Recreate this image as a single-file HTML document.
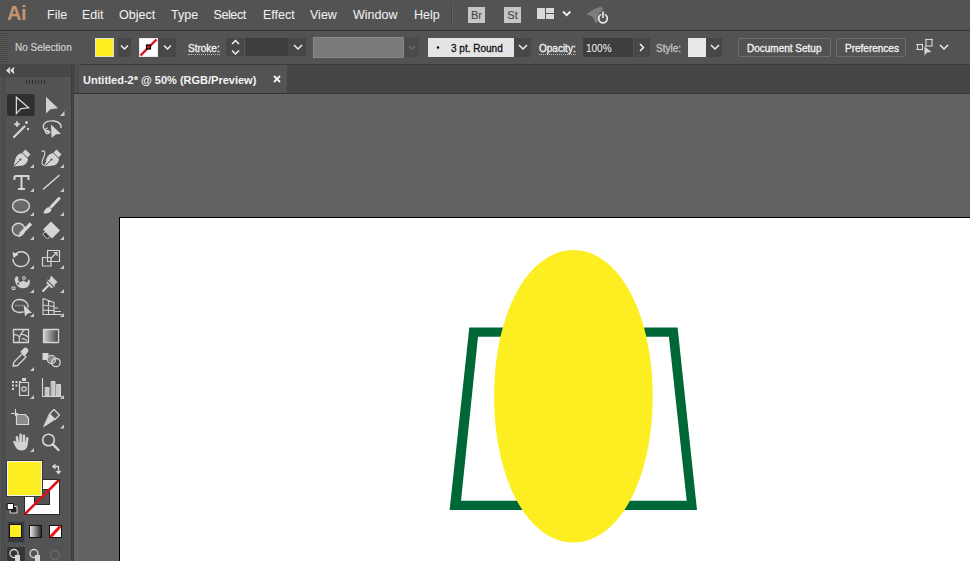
<!DOCTYPE html>
<html><head><meta charset="utf-8">
<style>
*{margin:0;padding:0;box-sizing:border-box}
html,body{width:970px;height:561px;overflow:hidden;background:#535353;font-family:"Liberation Sans",sans-serif;position:relative}
.a{position:absolute}
#menubar{left:0;top:0;width:970px;height:30px;background:#535353}
.mi{position:absolute;top:8px;font-size:12.5px;color:#f0f0f0;line-height:14px;white-space:pre;-webkit-text-stroke:0.05px currentColor}
#line1{left:0;top:30px;width:970px;height:1px;background:#353535}
#ctrl{left:0;top:31px;width:970px;height:33px;background:#535353}
#line2{left:0;top:64px;width:970px;height:1px;background:#3a3a3a}
#tabstrip{left:74px;top:64px;width:896px;height:30px;background:#454545;border-top:1px solid #3a3a3a}
#tab{left:79px;top:65px;width:208px;height:28px;background:#535353}
#tabline{left:74px;top:93px;width:896px;height:1px;background:#363636}
#paste{left:74px;top:94px;width:896px;height:467px;background:#626262}
#artboard{left:119px;top:217px;width:860px;height:360px;background:#fff;border:1px solid #000}
#toolpanel{left:0;top:64px;width:73px;height:497px;background:#535353}
#toolhead{left:0;top:64px;width:73px;height:13px;background:#474747}
#vline{left:72px;top:64px;width:2px;height:497px;background:#474747;border-right:1px solid #3c3c3c}
.lbl{position:absolute;font-size:10px;color:#f4f4f4;line-height:12px;white-space:pre;-webkit-text-stroke:0.3px currentColor}
.box{position:absolute;background:#474747}
.dot{border-bottom:1px dotted #bbb}
</style></head><body>
<div id="menubar" class="a">
  <div class="a" style="left:7px;top:1px;font-size:21px;font-weight:bold;color:#c6946f;line-height:24px;letter-spacing:-0.5px;transform:scaleX(0.95);transform-origin:0 0">Ai</div>
  <div class="mi" style="left:47px">File</div>
  <div class="mi" style="left:82px">Edit</div>
  <div class="mi" style="left:119px">Object</div>
  <div class="mi" style="left:171px">Type</div>
  <div class="mi" style="left:213.5px;letter-spacing:-0.4px">Select</div>
  <div class="mi" style="left:263px">Effect</div>
  <div class="mi" style="left:310px">View</div>
  <div class="mi" style="left:353px">Window</div>
  <div class="mi" style="left:414px">Help</div>
  <div class="a" style="left:451px;top:3px;width:1px;height:22px;background:#444"></div>
  <div class="a" style="left:452px;top:3px;width:1px;height:22px;background:#5e5e5e"></div>
  <div class="a" style="left:468px;top:7px;width:17px;height:16px;background:#c6c6c6;color:#474747;font-size:11px;line-height:16px;text-align:center;-webkit-text-stroke:0.1px currentColor">Br</div>
  <div class="a" style="left:504px;top:7px;width:17px;height:16px;background:#c6c6c6;color:#474747;font-size:11px;line-height:16px;text-align:center;-webkit-text-stroke:0.1px currentColor">St</div>
</div>
<div id="line1" class="a"></div>
<div id="ctrl" class="a">
</div>
<div id="line2" class="a"></div>
<div id="tabstrip" class="a"></div>
<div id="tab" class="a"></div>
<div class="a" style="left:74px;top:64px;width:5px;height:29px;background:#4d4d4d"></div>
<div class="a" style="left:83px;top:74px;font-size:11px;font-weight:bold;color:#f4f4f4;line-height:12px;white-space:pre">Untitled-2* @ 50% (RGB/Preview)</div>
<div id="tabline" class="a"></div>
<div id="paste" class="a"></div>
<div class="a" style="left:74px;top:94px;width:5px;height:467px;background:#656565"></div>
<div id="artboard" class="a"></div>
<svg class="a" style="left:0;top:0" width="970" height="561">
  <path fill="#006837" fill-rule="evenodd" d="M469.3 327.4 L677.6 327.4 L697 509.9 L449.6 509.9 Z M478 336.7 L461 500.7 L686.7 500.7 L668.9 336.7 Z"/>
  <path d="M573.4 250.10000000000002 C618.60 250.10000000000002 652.6999999999999 312.97 652.6999999999999 396.3 C652.6999999999999 479.63 618.60 542.5 573.4 542.5 C528.20 542.5 494.09999999999997 479.63 494.09999999999997 396.3 C494.09999999999997 312.97 528.20 250.10000000000002 573.4 250.10000000000002 Z" fill="#fcee21"/>
</svg>
<div id="toolpanel" class="a"></div>
<div id="toolhead" class="a"></div>
<div class="a" style="left:1px;top:77px;width:5px;height:484px;background:#4d4d4d"></div>
<div class="a" style="left:64px;top:77px;width:7px;height:484px;background:#555555"></div>
<div class="a" style="left:71px;top:64px;width:1px;height:497px;background:#3c3c3c"></div>
<div id="vline" class="a"></div>

<!-- control bar labels -->
<div class="a" style="left:0;top:33px;width:8px;height:29px;background:repeating-linear-gradient(180deg,#484848 0 1px,#565656 1px 2px)"></div>
<div class="lbl" style="left:15px;top:41.5px;color:#cfcfcf;-webkit-text-stroke:0.2px #cfcfcf">No Selection</div>
<div class="a" style="left:95px;top:38px;width:19px;height:19px;background:#fcee21;border:1px solid #e4e4d0"></div>
<div class="box" style="left:118px;top:38px;width:13px;height:19px"></div>
<div class="a" style="left:139px;top:38px;width:19px;height:19px;background:#fff;border:1px solid #e8e8e8"></div>
<div class="box" style="left:159px;top:38px;width:17px;height:19px"></div>
<div class="lbl dot" style="left:188px;top:43px;line-height:11px">Stroke:</div>
<div class="box" style="left:226px;top:38px;width:80px;height:18px"></div>
<div class="a" style="left:244px;top:38px;width:1px;height:18px;background:#5a5a5a"></div>
<div class="a" style="left:245px;top:38px;width:43px;height:18px;background:#3e3e3e"></div>
<div class="box" style="left:404px;top:38px;width:15px;height:19px;background:#4b4b4b"></div>
<div class="a" style="left:312.5px;top:37px;width:91px;height:21px;background:#7a7a7a;border:1px solid #888"></div>
<div class="a" style="left:428px;top:38px;width:86px;height:19px;background:#e4e4e4"></div>
<div class="lbl" style="left:451px;top:43px;color:#111">3 pt. Round</div>
<div class="box" style="left:514px;top:38px;width:17px;height:19px"></div>
<div class="lbl dot" style="left:539px;top:43px;line-height:11px">Opacity:</div>
<div class="a" style="left:583px;top:38px;width:50px;height:19px;background:#3e3e3e"></div>
<div class="lbl" style="left:586px;top:42.5px;-webkit-text-stroke:0">100%</div>
<div class="box" style="left:634px;top:38px;width:16px;height:19px"></div>
<div class="lbl" style="left:656px;top:43px;color:#c4c4c4">Style:</div>
<div class="a" style="left:688px;top:38px;width:18px;height:19px;background:#e8e8e8"></div>
<div class="box" style="left:706px;top:38px;width:16px;height:19px"></div>
<div class="a" style="left:738px;top:37.5px;width:93px;height:19.5px;border:1px solid #6e6e6e;border-radius:2px"></div>
<div class="lbl" style="left:747px;top:43px">Document Setup</div>
<div class="a" style="left:836px;top:37.5px;width:70px;height:19.5px;border:1px solid #6e6e6e;border-radius:2px"></div>
<div class="lbl" style="left:845px;top:43px">Preferences</div>

<!-- toolbar swatches -->
<div class="a" style="left:24px;top:479px;width:36px;height:36px;background:#fff;border:1px solid #2a2a2a"></div>
<div class="a" style="left:34px;top:489px;width:16px;height:16px;background:#535353;border:1px solid #2a2a2a"></div>
<div class="a" style="left:7px;top:461px;width:35px;height:35px;background:#fcee21;border:1px solid #f0f0f0;box-shadow:0 0 0 1px #3a3a3a"></div>
<div class="a" style="left:7px;top:521px;width:18px;height:22px;background:#3a3a3a;border:1px solid #4a4a5a"></div>
<div class="a" style="left:9px;top:524px;width:13px;height:14px;background:#fcee21;border:1.5px solid #111"></div>
<div class="a" style="left:29px;top:525px;width:13px;height:13px;background:linear-gradient(90deg,#e8e8e8,#2a2a2a);border:1.5px solid #111"></div>
<div class="a" style="left:49px;top:525px;width:13px;height:13px;background:#fff;border:1.5px solid #111"></div>
<div class="a" style="left:7px;top:547px;width:18px;height:14px;background:#363636"></div>
<!-- icons overlay -->
<svg class="a" style="left:0;top:0" width="970" height="561" fill="none" stroke="#d4d4d4" stroke-width="1.3">
  <!-- stroke swatch red line (ctrl) -->
  <line x1="140.5" y1="55.5" x2="156.5" y2="39.5" stroke="#d7141a" stroke-width="2.4"/>
  <rect x="146.5" y="45" width="4" height="4" fill="#d7141a" stroke="#000" stroke-width="1.2"/>
  <!-- chevrons -->
  <g stroke="#f0f0f0" stroke-width="1.5">
    <path d="M121 45.5 l3.5 3.5 l3.5 -3.5"/>
    <path d="M164 45.5 l3.5 3.5 l3.5 -3.5"/>
    <path d="M232 44 l3.5 -3.5 l3.5 3.5"/>
    <path d="M232 50.5 l3.5 3.5 l3.5 -3.5"/>
    <path d="M294 45 l4 4 l4 -4"/>
    <path d="M519 45 l4 4 l4 -4"/>
    <path d="M640 44 l3.5 3.5 l-3.5 3.5"/>
    <path d="M711 45 l4 4 l4 -4"/>
    <path d="M940 45 l4 4 l4 -4"/>
    <path d="M563 11.5 l3.7 3.7 l3.7 -3.7" stroke-width="1.8"/>
  </g>
  <path d="M409 46 l3 3 l3 -3" stroke="#6a6a6a"/>
  <circle cx="438" cy="47.5" r="1.2" fill="#000" stroke="none"/>
  <!-- stroke swatch toolbar red line -->
  <line x1="25" y1="514" x2="59" y2="480" stroke="#d7141a" stroke-width="2.5"/>
  <line x1="50.5" y1="537" x2="60.5" y2="526" stroke="#e8141a" stroke-width="3"/>
  <!-- workspace icon -->
  <rect x="537" y="8" width="8" height="11" fill="#dadada" stroke="none"/>
  <rect x="546" y="8" width="8" height="5" fill="#dadada" stroke="none"/>
  <rect x="546" y="14" width="8" height="5" fill="#dadada" stroke="none"/>
  <!-- sync icon -->
  <path d="M586.5 14.5 C590 11 595 8.5 601 6.5 C603 7 603.5 9 602 11 L599 13 C598 17 598.5 20 597 23 C595.5 23.5 594 21 593.5 18 C592 16 589 15 586.5 14.5 Z" fill="#7c7c7c" stroke="none"/>
  <circle cx="603" cy="18.5" r="4.3" stroke="#e4e4e4" stroke-width="1.8" fill="#535353"/>
  <line x1="603" y1="11.5" x2="603" y2="18.5" stroke="#535353" stroke-width="3.5"/>
  <line x1="603" y1="11.5" x2="603" y2="18" stroke="#e8e8e8" stroke-width="1.7"/>
  <!-- tab close -->
  <path d="M274 76 l6 6 M280 76 l-6 6" stroke="#f4f4f4" stroke-width="1.9"/>
  <!-- toolbar header arrows -->
  <path d="M10 67.5 L6.5 70.5 L10 73.5 L9 70.5 Z M14 67.5 L10.5 70.5 L14 73.5 L13 70.5 Z" fill="#e8e8e8" stroke="#e8e8e8" stroke-width="0.8"/>
  <!-- grip -->
  <g stroke="#2e2e2e" stroke-width="1">
    <path d="M26.5 80v4 M29.5 80v4 M32.5 80v4 M35.5 80v4 M38.5 80v4 M41.5 80v4 M44.5 80v4"/>
  </g>
  <!-- selection highlight -->
  <rect x="7" y="94" width="27.5" height="22" rx="2" fill="#2f2f2f" stroke="none"/>
  <path d="M16.4 97.2 L28.6 107.8 L21 108.6 L16.4 113.6 Z" stroke="#d8d8d8"/>
  <path d="M46 96.7 L58 108.3 L50.5 109.2 L46 113.6 Z" fill="#d0d0d0" stroke="none"/>

  <!-- TOOL ICONS -->
  <g stroke="#d6d6d6" stroke-width="1.4" fill="none" stroke-linecap="round" stroke-linejoin="round">
    <!-- magic wand -->
    <line x1="14" y1="137" x2="24.5" y2="126.5" stroke-width="2.2"/>
    <path d="M17 121.5 l1 2 l2 0.6 l-2 0.8 l-1 2 l-1-2 l-2-0.8 l2-0.6 z" fill="#d6d6d6" stroke-width="0.8"/>
    <circle cx="26.5" cy="122.5" r="1.4" fill="#d6d6d6" stroke="none"/>
    <circle cx="28" cy="129" r="1.2" fill="#d6d6d6" stroke="none"/>
    <!-- lasso -->
    <path d="M50 132.5 C44.5 132 42.5 127.5 43.5 125 C45 121.5 50 120.5 54 121 C58.5 121.5 61.5 124 61 127.5" stroke-width="1.4"/>
    <path d="M47.5 128 C45.5 128.5 44.5 131 46 133 C47.5 134.5 49.5 133.5 49 131.5 C48.5 130 47 130.5 46.5 131.5" stroke-width="1.2"/>
    <path d="M51 124.5 L61 134 L56 134.3 L51.5 138 Z" fill="#d6d6d6" stroke="none"/>
    <!-- pen -->
    <path d="M13.5 166.5 L15.5 158.5 C16.5 155.5 19 153.5 22 153 L28 159 C27.5 162 26 164.5 23 165.5 Z" fill="#d4d4d4" stroke="none"/>
    <path d="M22.5 152.5 L25.5 149.5 L30.5 154.5 L27.5 157.5 Z" fill="#d4d4d4" stroke="none"/>
    <path d="M14 166 L19.5 160.5" stroke="#535353" stroke-width="1"/>
    <circle cx="20.5" cy="159.5" r="1.1" fill="#535353" stroke="none"/>
    <!-- curvature pen -->
    <path d="M44.5 166.5 L46.5 158.5 C47.5 155.5 50 153.5 53 153 L59 159 C58.5 162 57 164.5 54 165.5 Z" fill="#d4d4d4" stroke="none"/>
    <path d="M53.5 152.5 L56.5 149.5 L61.5 154.5 L58.5 157.5 Z" fill="#d4d4d4" stroke="none"/>
    <path d="M45 166 L50.5 160.5" stroke="#535353" stroke-width="1"/>
    <circle cx="51.5" cy="159.5" r="1.1" fill="#535353" stroke="none"/>
    <path d="M42 151.5 C44 150 45.5 151.5 44.5 155 C43.5 158.5 41.5 161 42 163.5 C42.5 165 44 165.5 45 165" stroke-width="1.1"/>
    <!-- type T -->
    <path d="M14.5 176 H28.5 V180 M14.5 176 V180 M21.5 176 V189 M18 189 H25" stroke-width="2" stroke-linecap="butt"/>
    <!-- line -->
    <line x1="43.5" y1="189" x2="59" y2="175.5" stroke-width="1.5"/>
    <!-- ellipse -->
    <ellipse cx="21" cy="206" rx="8.5" ry="6.5" fill="#6a6a6a"/>
    <!-- paintbrush -->
    <line x1="59" y1="198.5" x2="51" y2="207" stroke-width="3"/>
    <path d="M43.5 213.5 C44 210 46 207.5 49 207 L51.5 209.5 C51 212.5 48 214 43.5 213.5 Z" fill="#d6d6d6" stroke="none"/>
    <!-- shaper -->
    <circle cx="18.5" cy="229.5" r="6.2" fill="#6a6a6a"/>
    <path d="M31 223.5 L20.5 234" stroke-width="3.2" stroke-linecap="butt"/>
    <path d="M18.5 237.5 L19.5 233 L22 235.5 Z" fill="#d6d6d6" stroke="none"/>
    <!-- eraser -->
    <path d="M51 221.5 L60 230.5 L52 238.5 L43 229.5 Z" fill="#d6d6d6" stroke="none"/>
    <path d="M45.5 232 L50 236.5 L47.5 239 L43 234.5 Z" fill="#3c3c3c" stroke="#d6d6d6" stroke-width="1"/>
    <!-- rotate -->
    <path d="M15 255 C18 250.5 25 250.5 28 255.5 C30.5 260 28 266 21.5 266.5 C16 267 13 263 13 259.5" stroke-width="1.5"/>
    <path d="M12.5 252 L18.5 254.5 L13.5 258 Z" fill="#d6d6d6" stroke="none"/>
    <!-- scale -->
    <rect x="47.5" y="250.5" width="12" height="11" stroke-width="1.2"/>
    <rect x="42.5" y="257.5" width="8.5" height="8.5" stroke-width="1.2"/>
    <path d="M51 258 L57 252.5 M54 252.5 H57 V255.5" stroke-width="1.2"/>
    <!-- puppet warp -->
    <path d="M15 281 C14 278 16 276 18 276.5 C19 279 17.5 280 19 281.5 C21 283 22 281 23.5 280.5 C25 280 25 283 27 282 C28.5 281 28 279 29 279.5 C30.5 280.5 30 284 28.5 286 C27 288 24 288.5 21 288 C18 287.5 16 285 15 281 Z" fill="#d0d0d0" stroke="none"/>
    <circle cx="18.5" cy="283.5" r="1.6" fill="#535353" stroke="#d0d0d0" stroke-width="1"/>
    <circle cx="24" cy="278" r="1.5" fill="#535353" stroke="#d0d0d0" stroke-width="1"/>
    <rect x="12.5" y="287" width="2.5" height="2.5" stroke-width="1"/>
    <!-- pin -->
    <path d="M51 275.5 L57.5 282 L54.5 285 L55 287.5 L47 279.5 L49.5 280 Z" fill="#d0d0d0" stroke="none"/>
    <path d="M47 281 L53.5 287.5 L51 288 L46.5 283.5 Z" fill="#d0d0d0" stroke="none"/>
    <line x1="48" y1="286" x2="43" y2="291" stroke-width="2"/>
    <!-- shape builder -->
    <path d="M23 312 C17 313.5 12 311 12.2 306 C12.4 301.5 16 299.2 20 299.5 C25 300 28.5 303 28 307" stroke-width="1.4"/>
    <path d="M15.5 305.5 h1 M18.5 305.5 h1 M21.5 305.5 h1" stroke-width="1.6" stroke-linecap="butt"/>
    <path d="M23.5 304.5 L32 313 L28 313.3 L25 316.5 Z" fill="#d6d6d6" stroke="none"/>
    <!-- perspective grid -->
    <path d="M43 298.5 V314.5 H62 M43 298.5 L54 302.5 V314.5 M48.5 300.5 V314.5 M43 305 L54 306.5 M43 310 L54 310.5 M54 308 H58 M54 311.5 H61" stroke-width="1.1" stroke-linecap="butt"/>
    <!-- mesh -->
    <rect x="13.5" y="329.5" width="15" height="13" stroke-width="1.3"/>
    <path d="M19 342 C19 338 20 334 24 330 M14 335 C16 334 18.5 335 19.5 337.5 M20.5 334.5 C23 334 26 335 28 337 M22 339 C24 338 26 339.5 27 341" stroke-width="1.1"/>
    <!-- gradient -->
    <rect x="43.5" y="329.5" width="15" height="13" fill="url(#gr1)" stroke-width="1.3"/>
    <!-- eyedropper -->
    <path d="M13 366 L14 362 L22.5 353.5 L26 357 L17.5 365.5 Z" stroke-width="1.3"/>
    <path d="M21 352 L24.5 348.5 C26 347.5 28.5 349.5 27.5 351.5 L24 355.5" fill="#d6d6d6" stroke-width="1.3"/>
    <!-- blend -->
    <rect x="42.5" y="353" width="6" height="7" fill="#d6d6d6" stroke="none"/>
    <circle cx="51.5" cy="359.5" r="4.2" fill="#8a8a8a" stroke-width="1.1"/>
    <circle cx="56" cy="362.5" r="4.2" stroke-width="1.3"/>
    <!-- symbol sprayer -->
    <g fill="#d6d6d6" stroke="none">
      <rect x="12" y="381" width="2" height="2"/><rect x="15.5" y="381" width="2" height="2"/><rect x="19" y="381" width="2" height="2"/>
      <rect x="12" y="384.5" width="2" height="2"/><rect x="15.5" y="384.5" width="2" height="2"/>
      <rect x="12" y="388" width="2" height="2"/>
      <rect x="22" y="378" width="4" height="3"/>
    </g>
    <rect x="19.5" y="382.5" width="9" height="13" stroke-width="1.2"/>
    <circle cx="24" cy="389" r="2.2" stroke-width="1.2"/>
    <!-- column graph -->
    <path d="M42.5 378 V396.5 H62" stroke-width="1.1" stroke-linecap="butt"/>
    <rect x="45.5" y="387.5" width="3.5" height="8.5" fill="#c8c8c8" stroke-width="1"/>
    <rect x="51.5" y="381.5" width="3.5" height="14.5" fill="#c8c8c8" stroke-width="1"/>
    <rect x="57" y="384.5" width="3.5" height="11.5" fill="#c8c8c8" stroke-width="1"/>
    <!-- artboard -->
    <path d="M11 413.5 H18 M15.5 409 V416" stroke-width="1.1" stroke-linecap="butt"/>
    <path d="M16.5 414.5 H25 L28.5 418 V424.5 H16.5 Z" fill="#8a8a8a" stroke-width="1.2"/>
    <!-- slice/knife -->
    <path d="M54 409.5 L59.5 415 L55 419.5 L49.5 414 Z" stroke-width="1.2"/>
    <path d="M49.5 414.5 L54.5 419.5 L44 426.5 Z" fill="#d6d6d6" stroke="#d6d6d6" stroke-width="1"/>
    <!-- hand -->
    <g fill="#d2d2d2" stroke="none">
      <rect x="16" y="436" width="2.6" height="9" rx="1.3" transform="rotate(-8 17 440)"/>
      <rect x="19.3" y="433.5" width="2.6" height="10" rx="1.3"/>
      <rect x="22.6" y="434.5" width="2.6" height="10" rx="1.3"/>
      <rect x="25.6" y="437" width="2.5" height="8" rx="1.25" transform="rotate(10 27 441)"/>
      <path d="M13 441.5 C14 440 15.5 441 16.5 442.5 L18 445 L18 442 H27.5 L27.5 446 C26.5 449 24.5 450.5 21.5 450.5 C18.5 450.5 17 449 15.5 447 Z"/>
    </g>
    <!-- zoom -->
    <circle cx="48.5" cy="440" r="5.8" stroke-width="1.6"/>
    <line x1="52.8" y1="444.3" x2="58.5" y2="450" stroke-width="2.4"/>
    <!-- swap arrows -->
    <path d="M53 466.5 H58.5 V472" stroke-width="1.3"/>
    <path d="M55.5 463.5 L52 466.5 L55.5 469.5 Z M55.5 471 L58.5 474.5 L61.5 471 Z" fill="#d6d6d6" stroke="none"/>
    <!-- default fill stroke -->
    <rect x="10.5" y="506.5" width="6.5" height="6.5" fill="#222" stroke="#d8d8d8" stroke-width="1"/>
    <rect x="7.5" y="503.5" width="6" height="6" fill="#fff" stroke="#111" stroke-width="1"/>
    <!-- draw modes -->
    <circle cx="14" cy="553.5" r="4" stroke-width="1.3"/>
    <rect x="15" y="555" width="5" height="6" fill="#d6d6d6" stroke="none"/>
    <circle cx="34" cy="553.5" r="4" stroke-width="1.3"/>
    <rect x="35" y="555" width="5" height="6" fill="#d6d6d6" stroke="none"/>
    <circle cx="55" cy="555" r="4.5" stroke="#6a6a6a" stroke-width="1.3"/>
  </g>
  <defs><linearGradient id="gr1" x1="0" x2="1"><stop offset="0" stop-color="#d0d0d0"/><stop offset="1" stop-color="#404040"/></linearGradient></defs>
  <!-- arrange icon -->
  <g stroke="#d8d8d8" stroke-width="1.1" fill="none">
    <rect x="917.5" y="44.5" width="5" height="5"/>
    <rect x="926" y="39.5" width="6" height="6.5"/>
    <path d="M916 44.5h3 M916 49.5h3 M925 39.5h2 M925 46h2 M931 39.5h2" stroke-width="0.8"/>
  </g>
  <path d="M924.5 46.5 L924.5 55.5 L927 52.5 L931.5 52 Z" fill="#d8d8d8" stroke="none"/>
  <!-- flyout triangles -->
  <g fill="#c8c8c8" stroke="none">
    <path d="M64.5 111 v5 h-4.5 z"/>
    <path d="M34 164 v4 h-4 z"/><path d="M64 164 v4 h-4 z"/>
    <path d="M34 188 v4 h-4 z"/><path d="M64 188 v4 h-4 z"/>
    <path d="M34 212 v4 h-4 z"/><path d="M64 212 v4 h-4 z"/>
    <path d="M34 236 v4 h-4 z"/><path d="M64 236 v4 h-4 z"/>
    <path d="M34 265 v4 h-4 z"/><path d="M64 265 v4 h-4 z"/>
    <path d="M34 289 v4 h-4 z"/><path d="M64 289 v4 h-4 z"/>
    <path d="M34 313 v4 h-4 z"/><path d="M64 313 v4 h-4 z"/>
    <path d="M34 367 v4 h-4 z"/>
    <path d="M34 395 v4 h-4 z"/><path d="M64 395 v4 h-4 z"/>
    <path d="M64 424.5 v4 h-4 z"/>
    <path d="M34 448 v4 h-4 z"/>
  </g>
</svg>
</body></html>
